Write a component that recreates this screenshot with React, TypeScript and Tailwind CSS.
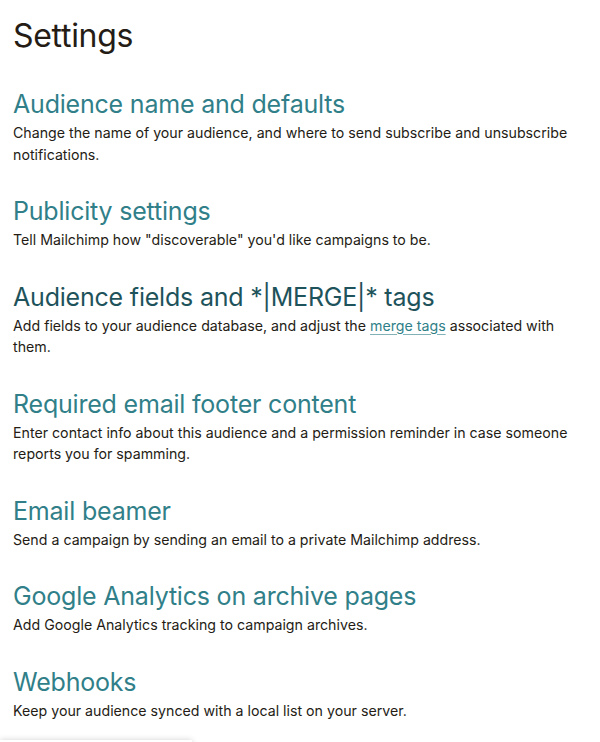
const sections: { title: string; body: React.ReactNode; active?: boolean }[] = [
  {
    title: 'Audience name and defaults',
    body: 'Change the name of your audience, and where to send subscribe and unsubscribe notifications.',
  },
  {
    title: 'Publicity settings',
    body: 'Tell Mailchimp how "discoverable" you\'d like campaigns to be.',
  },
  {
    title: 'Audience fields and *|MERGE|* tags',
    active: true,
    body: (
      <>
        Add fields to your audience database, and adjust the{' '}
        <a href="#" className="text-[#2f7f88] underline decoration-[#2f7f88]/60 underline-offset-[3px]">
          merge tags
        </a>{' '}
        associated with them.
      </>
    ),
  },
  {
    title: 'Required email footer content',
    body: 'Enter contact info about this audience and a permission reminder in case someone reports you for spamming.',
  },
  {
    title: 'Email beamer',
    body: 'Send a campaign by sending an email to a private Mailchimp address.',
  },
  {
    title: 'Google Analytics on archive pages',
    body: 'Add Google Analytics tracking to campaign archives.',
  },
  {
    title: 'Webhooks',
    body: 'Keep your audience synced with a local list on your server.',
  },
];

export default function App() {
  return (
    <div className="relative min-h-[742px] overflow-hidden bg-white px-[13px] pt-[14px] font-['Inter',sans-serif] text-[#241c15]">
      <h1 className="text-[32px] leading-[44px] font-normal tracking-[-0.3px]">Settings</h1>
      <div className="mt-[30px] flex flex-col gap-[30px]">
        {sections.map((s) => (
          <section key={s.title}>
            <h2
              className={`text-[25px] leading-[32px] font-normal tracking-[-0.2px] ${s.active ? 'text-[#1e535b]' : 'text-[#307f89]'}`}
            >
              <a href="#">{s.title}</a>
            </h2>
            <p className="mt-[2px] text-[14.2px] leading-[21.5px]">{s.body}</p>
          </section>
        ))}
      </div>
      <div className="absolute bottom-[-40px] left-0 h-[42px] w-[192px] bg-white shadow-[0_0_6px_rgba(0,0,0,0.18)]" />
    </div>
  );
}
